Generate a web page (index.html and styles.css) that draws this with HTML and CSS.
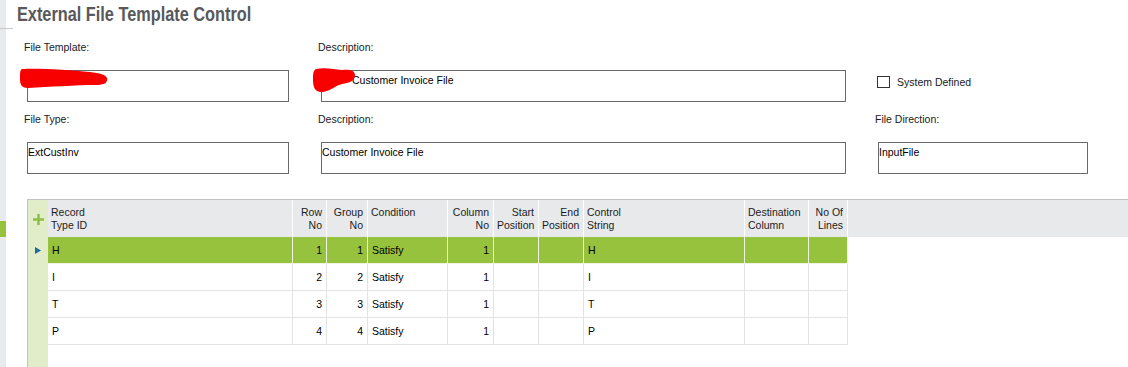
FILE: index.html
```html
<!DOCTYPE html>
<html lang="en">
<head>
  <meta charset="UTF-8">
  <title>External File Template Control</title>
  <link rel="stylesheet" href="styles.css">
</head>
<body>
  <div class="rail">
    <div class="rail-mark"></div>
    <div class="rail-active"></div>
  </div>

  <div class="main">
    <h1><span>External File Template Control</span></h1>

    <div class="form">
      <div class="label">File Template:</div>
      <div class="label">Description:</div>
      <div class="label"></div>

      <div class="field w1">
        <svg class="scribble s1" width="90" height="22" viewBox="0 0 90 22">
          <path d="M2,1 C18,0 50,2 70,4 C80,5 86,7 87,10 C88,15 84,17 76,17 C55,17 30,19 8,20 C2,20 0,17 0,11 C0,5 0,2 2,1 Z" fill="#f80000"/>
        </svg>
      </div>
      <div class="field w2 shifted">
        Customer Invoice File
        <svg class="scribble s2" width="46" height="27" viewBox="0 0 46 27">
          <path d="M4,2 C12,0 22,2 30,3 C37,2 43,3 43,8 C43,14 37,16 30,17 C22,19 18,25 9,25 C3,25 1,20 1,13 C1,7 1,4 4,2 Z" fill="#f80000"/>
        </svg>
      </div>
      <div class="check">
        <span class="box"></span>
        <span>System Defined</span>
      </div>

      <div class="label">File Type:</div>
      <div class="label">Description:</div>
      <div class="label">File Direction:</div>

      <div class="field w1">ExtCustInv</div>
      <div class="field w2">Customer Invoice File</div>
      <div class="field w3">InputFile</div>
    </div>

    <div class="grid">
      <div class="th ind">
        <svg width="11" height="11" viewBox="0 0 11 11">
          <path d="M4.3,0 h2.4 v4.3 h4.3 v2.4 h-4.3 v4.3 h-2.4 v-4.3 h-4.3 v-2.4 h4.3 z" fill="#8cbf3f"/>
        </svg>
      </div>
      <div class="th">Record<br>Type ID</div>
      <div class="th num">Row<br>No</div>
      <div class="th num">Group<br>No</div>
      <div class="th">Condition</div>
      <div class="th num">Column<br>No</div>
      <div class="th num">Start<br>Position</div>
      <div class="th num">End<br>Position</div>
      <div class="th">Control<br>String</div>
      <div class="th">Destination<br>Column</div>
      <div class="th num">No Of<br>Lines</div>
      <div class="th filler"></div>

      <div class="td ind current">
        <svg width="6" height="7" viewBox="0 0 6 7"><path d="M0,0 L6,3.5 L0,7 Z" fill="#1f6b93"/></svg>
      </div>
      <div class="td sel">H</div>
      <div class="td sel num">1</div>
      <div class="td sel num">1</div>
      <div class="td sel">Satisfy</div>
      <div class="td sel num">1</div>
      <div class="td sel"></div>
      <div class="td sel"></div>
      <div class="td sel">H</div>
      <div class="td sel"></div>
      <div class="td sel"></div>
      <div class="filler"></div>

      <div class="td ind"></div>
      <div class="td">I</div>
      <div class="td num">2</div>
      <div class="td num">2</div>
      <div class="td">Satisfy</div>
      <div class="td num">1</div>
      <div class="td"></div>
      <div class="td"></div>
      <div class="td">I</div>
      <div class="td"></div>
      <div class="td"></div>
      <div class="filler"></div>

      <div class="td ind"></div>
      <div class="td">T</div>
      <div class="td num">3</div>
      <div class="td num">3</div>
      <div class="td">Satisfy</div>
      <div class="td num">1</div>
      <div class="td"></div>
      <div class="td"></div>
      <div class="td">T</div>
      <div class="td"></div>
      <div class="td"></div>
      <div class="filler"></div>

      <div class="td ind"></div>
      <div class="td">P</div>
      <div class="td num">4</div>
      <div class="td num">4</div>
      <div class="td">Satisfy</div>
      <div class="td num">1</div>
      <div class="td"></div>
      <div class="td"></div>
      <div class="td">P</div>
      <div class="td"></div>
      <div class="td"></div>
      <div class="filler"></div>

      <div class="ind tail"></div>
    </div>
  </div>
</body>
</html>
```

FILE: styles.css
```css
body {
  margin: 0;
  display: flex;
  min-height: 367px;
  font-family: "Liberation Sans", Arial, sans-serif;
  font-size: 10.5px;
  color: #111;
  background-color: #fff;
  overflow: hidden;
}

/* left rail */
.rail {
  width: 6px;
  flex: none;
  background-color: #e9eaec;
  display: flex;
  flex-direction: column;
}

.rail-mark {
  margin-top: 28px;
  width: 13px;
  height: 1px;
  background-color: #c9c9c9;
}

.rail-active {
  margin-top: 192px;
  height: 16px;
  background-color: #97c23d;
}

.main {
  flex: 1;
  padding-left: 11px;
}

/* no narrow face installed: squeeze the bold face */
h1 {
  margin: 0 0 2px;
  height: 28px;
  line-height: 28px;
  font-family: "Liberation Sans", Arial, sans-serif;
  font-weight: bold;
  font-size: 20px;
  color: #58595b;
  white-space: nowrap;
}

h1 span {
  display: inline-block;
  transform: scaleX(0.815);
  transform-origin: 0 50%;
}

/* header form */
.form {
  display: grid;
  grid-template-columns: 294px 557px 1fr;
  margin-left: 7px;
}

.label {
  line-height: 14px;
  padding: 10px 0 16px;
  height: 14px;
  color: #1a1a1a;
}

.field {
  position: relative;
  box-sizing: border-box;
  margin-left: 3px;
  height: 32px;
  border: 1px solid #6a6a6a;
  padding: 2px 0 0;
  line-height: 14px;
  color: #000;
}

.w1 { width: 262px; }
.w2 { width: 525px; }
.w3 { width: 210px; }

.shifted {
  padding-left: 30px;
}

.scribble {
  position: absolute;
  display: block;
}

.s1 {
  left: -8px;
  top: -3px;
}

.s2 {
  left: -10px;
  top: -4px;
}

.check {
  display: flex;
  align-items: center;
  gap: 7px;
  margin-left: 2px;
  padding-top: 6px;
  height: 12px;
  line-height: 12px;
  color: #1a1a1a;
}

.box {
  box-sizing: border-box;
  width: 13px;
  height: 12px;
  border: 1px solid #333;
  background-color: #fff;
}

/* record grid */
.grid {
  margin: 25px 0 0 10px;
  border-top: 1px solid #c3c3c3;
  border-left: 1px solid #c3c3c3;
  display: grid;
  grid-template-columns: 20px 245px 34px 41px 80px 46px 45px 45px 161px 64px 39px 1fr;
  grid-template-rows: 37px repeat(4, 27px) 30px;
}

.th {
  box-sizing: border-box;
  background-color: #e8e9eb;
  border-right: 1px solid #fff;
  padding: 6px 4px 0 3px;
  line-height: 13px;
  color: #1c1c1c;
  white-space: nowrap;
}

.th.ind {
  display: flex;
  align-items: center;
  justify-content: center;
  padding: 1px 0 0;
  border-right: none;
}

.th.filler {
  border-right: none;
}

.td {
  box-sizing: border-box;
  border-right: 1px solid #e3e3e3;
  border-bottom: 1px solid #e3e3e3;
  padding: 0 4px 0 4px;
  line-height: 26px;
  color: #000;
  white-space: nowrap;
}

.num {
  text-align: right;
}

.td.sel {
  background-color: #97c23d;
  border-color: #eef3e2;
}

.ind {
  background-color: #e1ecc9;
}

.td.ind {
  border: none;
  padding: 0;
}

.td.current {
  display: flex;
  align-items: center;
  justify-content: center;
}

.tail {
  grid-column: 1;
}
```
